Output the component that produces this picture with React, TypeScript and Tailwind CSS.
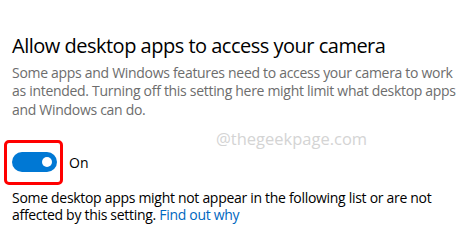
export default function App() {
  return (
    <div className="relative w-[469px] h-[246px] bg-white overflow-hidden font-['Open_Sans',sans-serif]">
      <div className="pl-3 pt-8">
        <h1 className="text-[20px] leading-[28px] font-normal text-black tracking-[-0.5px] whitespace-nowrap">
          Allow desktop apps to access your camera
        </h1>
        <p className="mt-[4px] text-[14px] leading-[18.3px] text-[#6d6d6d] tracking-[-0.3px] whitespace-nowrap">
          Some apps and Windows features need to access your camera to work
          <br />
          as intended. Turning off this setting here might limit what desktop apps
          <br />
          and Windows can do.
        </p>

        <div className="mt-[21px] flex items-center">
          {/* highlighted toggle */}
          <div className="-ml-2 w-[59px] h-[45px] border-[3px] border-[#ff0000] rounded-[5px] flex items-center pl-[5px]">
            <div className="w-[45px] h-[20px] rounded-full bg-[#0078d4] flex items-center justify-end pr-[5px]">
              <div className="w-[10px] h-[10px] rounded-full bg-white" />
            </div>
          </div>
          <span className="ml-[6px] text-[14px] text-black">On</span>
        </div>

        <p className="mt-[4px] text-[14px] leading-[17.5px] text-black tracking-[-0.3px] whitespace-nowrap">
          Some desktop apps might not appear in the following list or are not
          <br />
          affected by this setting. <a href="#" className="text-[#0067c0]">Find out why</a>
        </p>
      </div>

      <span className="absolute left-[216px] top-[127px] text-[16.5px] text-[#d4d4d4]">@thegeekpage.com</span>
    </div>
  )
}
